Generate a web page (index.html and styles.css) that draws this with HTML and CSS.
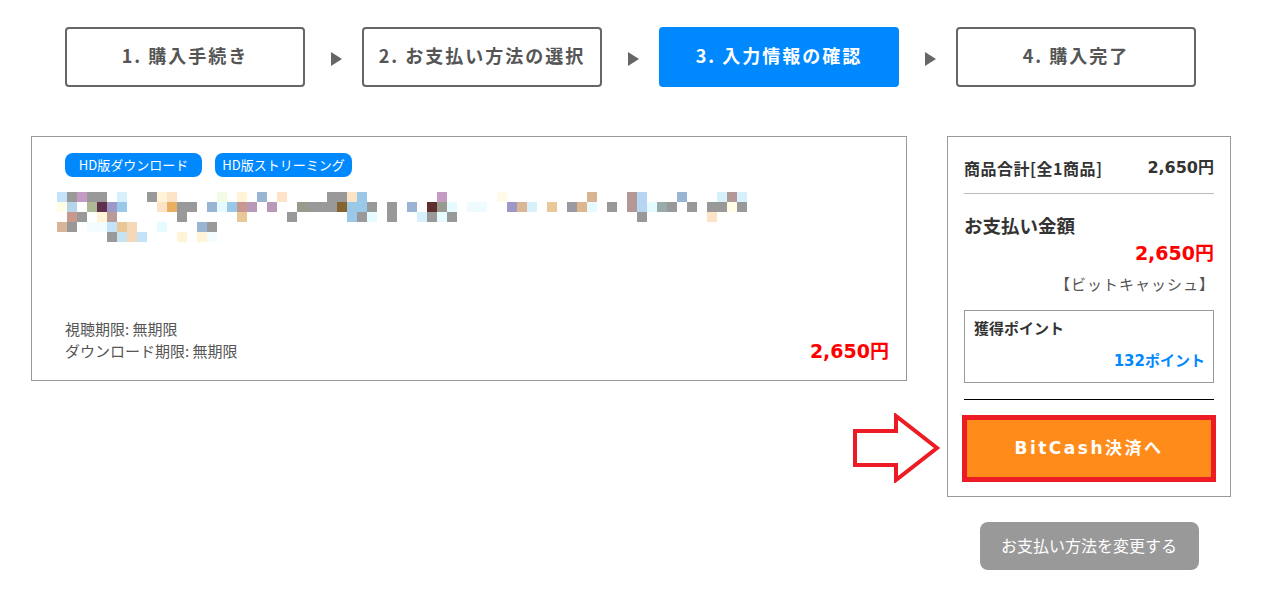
FILE: index.html
```html
<!DOCTYPE html>
<html lang="ja">
<head>
<meta charset="utf-8">
<title>購入確認</title>
<link rel="stylesheet" href="styles.css">
</head>
<body>
<div class="page">
  <div class="steps">
    <div class="step">1. 購入手続き</div>
    <div class="step-arrow"></div>
    <div class="step">2. お支払い方法の選択</div>
    <div class="step-arrow"></div>
    <div class="step active">3. 入力情報の確認</div>
    <div class="step-arrow"></div>
    <div class="step">4. 購入完了</div>
  </div>

  <div class="main">
    <div class="item-card">
      <div class="tags">
        <span class="tag">HD版ダウンロード</span>
        <span class="tag">HD版ストリーミング</span>
      </div>
      <svg class="mosaic" width="700" height="50" viewBox="0 0 700 50">
        <g>
          <rect x="0" y="0" width="10" height="10" fill="#c5e3f8"/>
          <rect x="10" y="0" width="10" height="10" fill="#999"/>
          <rect x="20" y="0" width="10" height="10" fill="#c49bc2"/>
          <rect x="30" y="0" width="20" height="10" fill="#999"/>
          <rect x="60" y="0" width="10" height="10" fill="#d6f1fb"/>
          <rect x="90" y="0" width="10" height="10" fill="#999"/>
          <rect x="100" y="0" width="10" height="10" fill="#fff3d8"/>
          <rect x="110" y="0" width="10" height="10" fill="#fde3c6"/>
          <rect x="160" y="0" width="10" height="10" fill="#f3fbe6"/>
          <rect x="180" y="0" width="10" height="10" fill="#fff3d8"/>
          <rect x="200" y="0" width="10" height="10" fill="#9ab4d4"/>
          <rect x="220" y="0" width="10" height="10" fill="#fde4c8"/>
          <rect x="270" y="0" width="20" height="10" fill="#999"/>
          <rect x="290" y="0" width="10" height="10" fill="#fde3c6"/>
          <rect x="300" y="0" width="10" height="10" fill="#9ac8e8"/>
          <rect x="380" y="0" width="10" height="10" fill="#c49bc2"/>
          <rect x="440" y="0" width="10" height="10" fill="#fffbe8"/>
          <rect x="530" y="0" width="10" height="10" fill="#d8b495"/>
          <rect x="570" y="0" width="10" height="10" fill="#b49898"/>
          <rect x="580" y="0" width="10" height="10" fill="#b5d5f0"/>
          <rect x="620" y="0" width="10" height="10" fill="#9ab4d4"/>
          <rect x="660" y="0" width="10" height="10" fill="#d6f1fb"/>
          <rect x="670" y="0" width="10" height="10" fill="#b49898"/>
          <rect x="680" y="0" width="10" height="10" fill="#d6f1fb"/>
        </g>
        <g>
          <rect x="0" y="10" width="10" height="10" fill="#fffde6"/>
          <rect x="10" y="10" width="10" height="10" fill="#b5d5ea"/>
          <rect x="30" y="10" width="10" height="10" fill="#adb994"/>
          <rect x="40" y="10" width="10" height="10" fill="#60314e"/>
          <rect x="50" y="10" width="10" height="10" fill="#9d98c8"/>
          <rect x="60" y="10" width="10" height="10" fill="#9ac8e8"/>
          <rect x="100" y="10" width="10" height="10" fill="#fde3c6"/>
          <rect x="110" y="10" width="10" height="10" fill="#e8b060"/>
          <rect x="120" y="10" width="20" height="10" fill="#999"/>
          <rect x="150" y="10" width="10" height="10" fill="#9ab4d4"/>
          <rect x="160" y="10" width="10" height="10" fill="#e6fbff"/>
          <rect x="170" y="10" width="10" height="10" fill="#9ac8e8"/>
          <rect x="180" y="10" width="10" height="10" fill="#c8988f"/>
          <rect x="190" y="10" width="10" height="10" fill="#b89ab8"/>
          <rect x="210" y="10" width="10" height="10" fill="#b89ab8"/>
          <rect x="240" y="10" width="10" height="10" fill="#9a9a8a"/>
          <rect x="250" y="10" width="30" height="10" fill="#999"/>
          <rect x="280" y="10" width="10" height="10" fill="#85622e"/>
          <rect x="290" y="10" width="20" height="10" fill="#9ac8e8"/>
          <rect x="310" y="10" width="10" height="10" fill="#999"/>
          <rect x="330" y="10" width="10" height="10" fill="#999"/>
          <rect x="350" y="10" width="10" height="10" fill="#9ab4d4"/>
          <rect x="370" y="10" width="10" height="10" fill="#612e2e"/>
          <rect x="380" y="10" width="10" height="10" fill="#999a90"/>
          <rect x="390" y="10" width="10" height="10" fill="#e6fbff"/>
          <rect x="410" y="10" width="10" height="10" fill="#eefbfd"/>
          <rect x="420" y="10" width="10" height="10" fill="#eefbff"/>
          <rect x="450" y="10" width="10" height="10" fill="#9d98c8"/>
          <rect x="460" y="10" width="10" height="10" fill="#dbb695"/>
          <rect x="470" y="10" width="10" height="10" fill="#d6f1fb"/>
          <rect x="490" y="10" width="10" height="10" fill="#e8c898"/>
          <rect x="510" y="10" width="10" height="10" fill="#9a98a0"/>
          <rect x="520" y="10" width="10" height="10" fill="#dbb68e"/>
          <rect x="530" y="10" width="10" height="10" fill="#e6fbff"/>
          <rect x="550" y="10" width="10" height="10" fill="#999"/>
          <rect x="570" y="10" width="10" height="10" fill="#b49898"/>
          <rect x="580" y="10" width="10" height="10" fill="#b5d5f0"/>
          <rect x="590" y="10" width="10" height="10" fill="#e6fbff"/>
          <rect x="600" y="10" width="10" height="10" fill="#98aaaa"/>
          <rect x="610" y="10" width="10" height="10" fill="#999"/>
          <rect x="630" y="10" width="10" height="10" fill="#999"/>
          <rect x="650" y="10" width="20" height="10" fill="#999"/>
          <rect x="670" y="10" width="10" height="10" fill="#fffde6"/>
          <rect x="680" y="10" width="10" height="10" fill="#999"/>
        </g>
        <g>
          <rect x="10" y="20" width="10" height="10" fill="#c8988f"/>
          <rect x="20" y="20" width="10" height="10" fill="#999"/>
          <rect x="40" y="20" width="10" height="10" fill="#fff3d8"/>
          <rect x="50" y="20" width="10" height="10" fill="#b89a98"/>
          <rect x="120" y="20" width="10" height="10" fill="#999"/>
          <rect x="180" y="20" width="10" height="10" fill="#e8c898"/>
          <rect x="230" y="20" width="10" height="10" fill="#999"/>
          <rect x="290" y="20" width="10" height="10" fill="#9ac8e8"/>
          <rect x="300" y="20" width="10" height="10" fill="#999"/>
          <rect x="310" y="20" width="10" height="10" fill="#e6fbff"/>
          <rect x="330" y="20" width="10" height="10" fill="#999"/>
          <rect x="360" y="20" width="10" height="10" fill="#d6f1fb"/>
          <rect x="370" y="20" width="10" height="10" fill="#999"/>
          <rect x="380" y="20" width="10" height="10" fill="#e6fbff"/>
          <rect x="390" y="20" width="10" height="10" fill="#999"/>
          <rect x="580" y="20" width="10" height="10" fill="#999"/>
          <rect x="650" y="20" width="10" height="10" fill="#fde4c8"/>
        </g>
        <g>
          <rect x="0" y="30" width="10" height="10" fill="#d8b498"/>
          <rect x="10" y="30" width="10" height="10" fill="#999"/>
          <rect x="30" y="30" width="20" height="10" fill="#f3fcff"/>
          <rect x="50" y="30" width="10" height="10" fill="#c5e3f8"/>
          <rect x="60" y="30" width="10" height="10" fill="#e8c898"/>
          <rect x="70" y="30" width="10" height="10" fill="#f5d8b8"/>
          <rect x="100" y="30" width="10" height="10" fill="#e6fbff"/>
          <rect x="140" y="30" width="10" height="10" fill="#9ab4d4"/>
          <rect x="150" y="30" width="10" height="10" fill="#999"/>
        </g>
        <g>
          <rect x="50" y="40" width="10" height="10" fill="#999"/>
          <rect x="60" y="40" width="10" height="10" fill="#c5e3f0"/>
          <rect x="70" y="40" width="10" height="10" fill="#f5d8b8"/>
          <rect x="80" y="40" width="10" height="10" fill="#c5e3f8"/>
          <rect x="120" y="40" width="10" height="10" fill="#fff3d8"/>
          <rect x="140" y="40" width="10" height="10" fill="#fff3d8"/>
          <rect x="150" y="40" width="10" height="10" fill="#f3fcff"/>
        </g>
      </svg>
      <div class="item-foot">
        <div class="limits">
          <div>視聴期限: 無期限</div>
          <div>ダウンロード期限: 無期限</div>
        </div>
        <div class="item-price">2,650円</div>
      </div>
    </div>

    <div class="side">
      <div class="summary">
        <div class="sum-row">
          <span class="sum-label">商品合計[全1商品]</span>
          <span class="sum-value">2,650円</span>
        </div>
        <div class="pay-title">お支払い金額</div>
        <div class="pay-price">2,650円</div>
        <div class="pay-method">【ビットキャッシュ】</div>
        <div class="points">
          <div class="points-label">獲得ポイント</div>
          <div class="points-value">132ポイント</div>
        </div>
        <div class="separator"></div>
        <div class="pay-btn">BitCash決済へ</div>
        <svg class="red-arrow" width="90" height="70" viewBox="0 0 90 70">
          <path d="M3 18 H44 V3 L85 35 L44 67 V52 H3 Z" fill="none" stroke="#ed1c24" stroke-width="4" stroke-linejoin="miter"/>
        </svg>
      </div>
      <div class="change-wrap">
        <div class="change-btn">お支払い方法を変更する</div>
      </div>
    </div>
  </div>
</div>
</body>
</html>
```

FILE: styles.css
```css
* { box-sizing: border-box; }
html, body { margin: 0; padding: 0; background: #fff; }
body {
  font-family: "DejaVu Sans", "Noto Sans CJK JP", sans-serif;
  color: #333;
}
.page {
  width: 1265px;
  padding: 27px 0 0 31px;
}
.steps {
  display: flex;
  align-items: center;
  margin-left: 34px;
}
.step {
  width: 240px;
  height: 60px;
  border: 2px solid #666;
  border-radius: 4px;
  display: flex;
  align-items: center;
  justify-content: center;
  padding-bottom: 5px;
  font-family: "Noto Sans CJK JP", sans-serif;
  font-weight: bold;
  font-size: 18px;
  letter-spacing: 2px;
  color: #555;
}
.step.active {
  background: #0088ff;
  border-color: #0088ff;
  color: #fff;
}
.step-arrow {
  width: 57px;
  display: flex;
  justify-content: center;
  padding-top: 4px;
}
.step-arrow::before {
  content: "";
  display: block;
  margin-left: 6px;
  border-left: 11px solid #666;
  border-top: 7px solid transparent;
  border-bottom: 7px solid transparent;
}
.main {
  display: flex;
  align-items: flex-start;
  gap: 40px;
  margin-top: 49px;
}
.item-card {
  width: 876px;
  height: 245px;
  border: 1px solid #999;
  padding: 16px 17px 14px 33px;
  display: flex;
  flex-direction: column;
}
.tags {
  display: flex;
  gap: 13px;
}
.tag {
  width: 137px;
  height: 24px;
  line-height: 24px;
  border-radius: 8px;
  background: #0088ff;
  color: #fff;
  font-size: 13px;
  font-family: "Noto Sans CJK JP", sans-serif;
  text-align: center;
  white-space: nowrap;
}
.mosaic {
  display: block;
  margin: 15px 0 0 -8px;
}
.item-foot {
  margin-top: auto;
  display: flex;
  justify-content: space-between;
  align-items: flex-end;
}
.limits {
  font-family: "Noto Sans CJK JP", sans-serif;
  font-size: 15px;
  line-height: 22px;
  color: #555;
  margin-bottom: 4px;
}
.item-price {
  font-size: 19px;
  font-weight: bold;
  color: #ff0000;
  line-height: 26px;
  margin-bottom: 2px;
}
.side {
  width: 284px;
}
.summary {
  position: relative;
  border: 1px solid #999;
  padding: 18px 16px 14px 16px;
}
.sum-row {
  display: flex;
  justify-content: space-between;
  font-weight: bold;
  line-height: 26px;
  padding-bottom: 12px;
  border-bottom: 1px solid #bbb;
}
.sum-label {
  font-family: "Noto Sans CJK JP", sans-serif;
  font-size: 16px;
  letter-spacing: 0.5px;
}
.sum-value {
  font-size: 16px;
}
.pay-title {
  font-family: "Noto Sans CJK JP", sans-serif;
  font-weight: bold;
  font-size: 18.5px;
  line-height: 26px;
  margin-top: 18px;
}
.pay-price {
  text-align: right;
  font-weight: bold;
  font-size: 19px;
  color: #ff0000;
  line-height: 28px;
  margin-top: 1px;
}
.pay-method {
  text-align: right;
  font-family: "Noto Sans CJK JP", sans-serif;
  font-size: 15px;
  letter-spacing: 1px;
  color: #555;
  line-height: 24px;
  margin-top: 5px;
  margin-right: -1px;
}
.points {
  margin-top: 14px;
  border: 1px solid #999;
  height: 73px;
  padding: 6px 8px 0 9px;
}
.points-label {
  font-family: "Noto Sans CJK JP", sans-serif;
  font-weight: bold;
  font-size: 15px;
  line-height: 22px;
}
.points-value {
  text-align: right;
  font-weight: bold;
  font-size: 15px;
  color: #0088ff;
  line-height: 22px;
  margin-top: 11px;
}
.separator {
  height: 1px;
  background: #000;
  margin-top: 16px;
}
.pay-btn {
  margin: 15px -2px 0 -2px;
  height: 67px;
  border: 5px solid #ed1c24;
  background: #ff8c1a;
  color: #fff;
  font-weight: bold;
  font-size: 17px;
  letter-spacing: 2.5px;
  padding-bottom: 5px;
  display: flex;
  align-items: center;
  justify-content: center;
}
.red-arrow {
  position: absolute;
  left: -96px;
  top: 276px;
}
.change-wrap {
  display: flex;
  justify-content: center;
  margin-top: 25px;
}
.change-btn {
  width: 219px;
  height: 48px;
  border-radius: 8px;
  background: #999;
  color: #fff;
  font-family: "Noto Sans CJK JP", sans-serif;
  font-size: 16px;
  padding-bottom: 3px;
  display: flex;
  align-items: center;
  justify-content: center;
}
```
